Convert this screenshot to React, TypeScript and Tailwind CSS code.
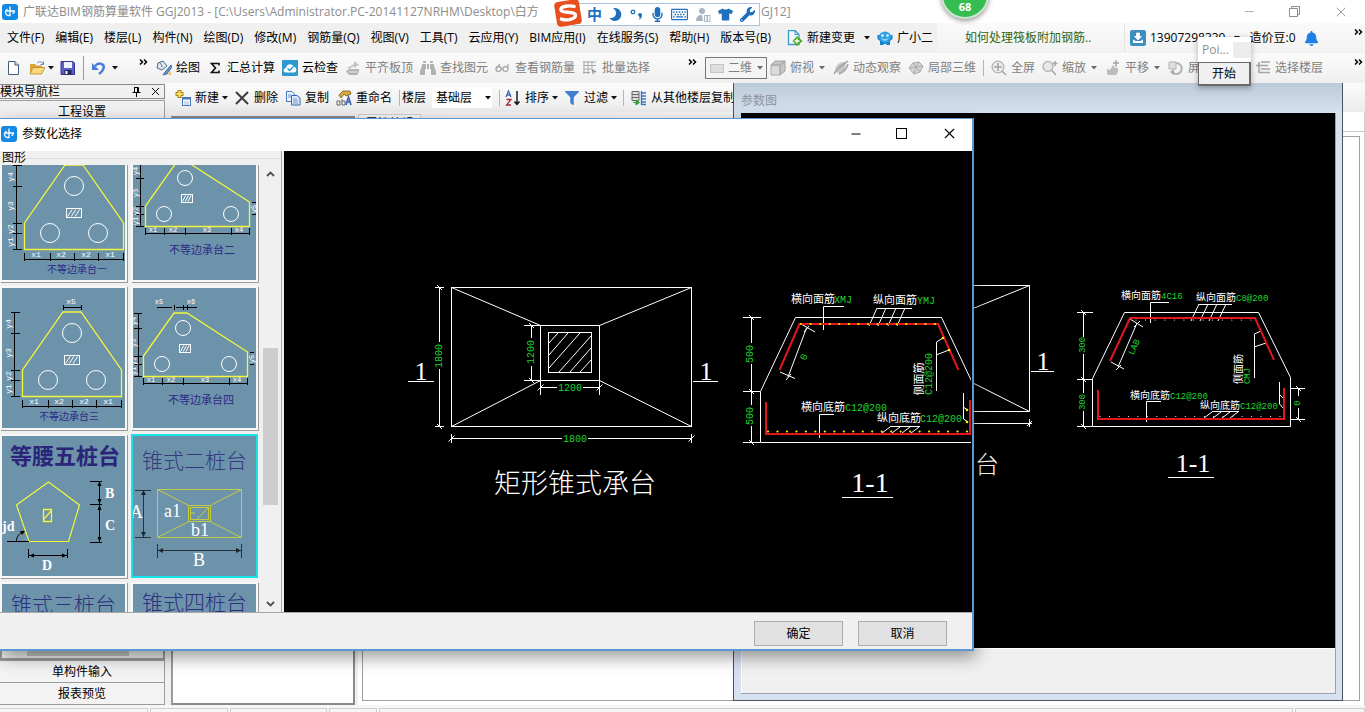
import React from "react";
import {
  FaBell,
  FaBinoculars,
  FaFilter,
  FaMicrophone,
  FaMoon,
  FaRegKeyboard,
  FaTshirt,
  FaWrench,
} from "react-icons/fa";
import { Minus, Square, X } from "lucide-react";

type Pt = [number, number];
const pts = (list: Pt[]) => list.map((p) => p.join(",")).join(" ");

/* ---------- small parts ---------- */

function Caret({ muted = false }: { muted?: boolean }) {
  return (
    <svg width="8" height="4" viewBox="0 0 8 4" className="shrink-0" aria-hidden="true">
      <path d="M1 0H7L4 3.4Z" fill={muted ? "#6b6b6b" : "#111"} />
    </svg>
  );
}

function More() {
  return (
    <svg width="9" height="6" viewBox="0 0 9 6" className="shrink-0" aria-hidden="true">
      <path d="M1 0.5L3.5 3L1 5.5M5 0.5L7.5 3L5 5.5" fill="none" stroke="#000" strokeWidth="1.5" />
    </svg>
  );
}

function AppLogo() {
  return (
    <svg width="16" height="16" viewBox="0 0 16 16" className="shrink-0" aria-hidden="true">
      <rect width="16" height="16" rx="3" fill="#1389e6" />
      <path
        d="M8 2.500V12M3.500 7H13M5.500 5C2.500 6.500 3 10.500 6 11.500H8.500M10.500 9.500C12.500 9 12.500 7.500 12 7"
        fill="none"
        stroke="#fff"
        strokeWidth="1.300"
      />
    </svg>
  );
}

const glyphs: Record<string, React.ReactNode> = {
  newfile: (
    <>
      <path d="M2.500 1.500H9L12.500 5V14.500H2.500Z" fill="#fff" stroke="#44597c" />
      <path d="M9 1.500V5H12.500" fill="#cfe0f5" stroke="#44597c" />
    </>
  ),
  open: (
    <>
      <path d="M1 4H6L7.500 5.500H13V13H1Z" fill="#d9a43a" />
      <path d="M1 14L4 7.500H16L12.500 14Z" fill="#f9d77a" stroke="#b9862a" strokeWidth="0.800" />
      <path d="M8 3C10 1 12.500 1 14 4M14.500 1.500V4.500H11.500" fill="none" stroke="#5b8abf" />
    </>
  ),
  save: (
    <>
      <path d="M1 1.500H13L14.500 3V14.500H1Z" fill="#5a5ec6" stroke="#33378f" />
      <rect x="4" y="2" width="8" height="6" fill="#eef1fb" />
      <rect x="4.500" y="10" width="7" height="4.500" fill="#23265e" />
      <rect x="5.500" y="11" width="2" height="3" fill="#fff" />
    </>
  ),
  undo: (
    <>
      <path d="M4 6C8 1.500 14 4 12.500 8.500C12 10.500 10 12.500 8 14" fill="none" stroke="#4a7fd8" strokeWidth="2.500" />
      <path d="M1 3V10H8Z" fill="#4a7fd8" />
    </>
  ),
  draw: (
    <>
      <path d="M2 3L7 1L11 6L6 10L1 8Z" fill="#dfe8f2" stroke="#4d6683" />
      <path d="M3 2C5 4 6 5 6 7" fill="none" stroke="#4d6683" />
      <path d="M15 5L9 12L7 15L11 14L16 7Z" fill="#5f8fd0" stroke="#3b5f99" strokeWidth="0.800" />
      <path d="M12 15L15 11V15Z" fill="#e8c13f" />
    </>
  ),
  sigma: <path d="M12 5.500V3.500H4.500L8.500 8L4.500 12.500H12V10.500" fill="none" stroke="#111" strokeWidth="1.600" />,
  cloud: (
    <>
      <rect width="16" height="16" rx="1" fill="#2f98cf" />
      <path d="M4 12.500C0.500 12.500 1 8 4 8C4.500 3.500 10.500 3 11.500 7C15.500 7 15 12.500 12 12.500Z" fill="#fff" />
      <path d="M5.500 8.500L7.500 10.500L11 7" fill="none" stroke="#2f98cf" strokeWidth="1.500" />
    </>
  ),
  slab: (
    <>
      <path d="M2 8L9 4V1L14 5L9 8V6L4 9Z" fill="#c3c3c3" />
      <path d="M1 11L5 9H14V12L12 15H4Z" fill="#b2b2b2" />
      <path d="M4 12H13" stroke="#e8e8e8" />
    </>
  ),
  glasses: (
    <path
      d="M1 9a2.500 2.500 0 1 0 5 0a2.500 2.500 0 1 0-5 0M8 9a2.500 2.500 0 1 0 5 0a2.500 2.500 0 1 0-5 0M6 9H8M1 9L5 4M13 9V4"
      fill="none"
      stroke="#a9a9a9"
      strokeWidth="1.300"
    />
  ),
  batch: (
    <>
      <path d="M1 2H14M1 5.500H14M1 9H9M1 12.500H8M2 1V14M6 1V14M10 1V8" stroke="#aaa" fill="none" />
      <path d="M9 8L15 12L12 12.500L11 15Z" fill="#9d9d9d" />
    </>
  ),
  cube: (
    <>
      <path d="M1 5H10V15H1Z" fill="#dcdcdc" stroke="#aaa" />
      <path d="M1 5L5 1H15L10 5ZM10 5L15 1V11L10 15Z" fill="#c6c6c6" stroke="#a3a3a3" />
    </>
  ),
  orbit: (
    <>
      <path d="M3 12C1 7 5 2 12 2C14 6 11 13 5 13Z" fill="#c4c4c4" />
      <path d="M1 14C4 8 9 5 15 1M6 14C11 12 14 8 15 4" stroke="#a2a2a2" fill="none" strokeWidth="1.500" />
    </>
  ),
  local3d: (
    <>
      <path d="M1 8L5 3L11 2L15 6L12 12L6 14Z" fill="#d4d4d4" stroke="#ababab" />
      <path d="M5 3L8 7L6 14M8 7L15 6M1 8L8 7M11 2L8 7L12 12" stroke="#aaa" fill="none" />
    </>
  ),
  fit: (
    <>
      <circle cx="7" cy="7" r="5.800" fill="#eee" stroke="#b2b2b2" strokeWidth="1.300" />
      <path d="M7 3V11M3 7H11M11 11L15 15" stroke="#a4a4a4" strokeWidth="1.600" />
    </>
  ),
  zoom: (
    <>
      <circle cx="6" cy="6.500" r="4.900" fill="#e9e9e9" stroke="#b8b8b8" strokeWidth="1.500" />
      <path d="M9.500 10L14 15M13 1V6M10.500 3.500H15.500" stroke="#a8a8a8" strokeWidth="1.600" />
    </>
  ),
  pan: (
    <>
      <path d="M2 14V9L5 10L8 5L10 8L13 8V12L11 15H3Z" fill="#bcbcbc" />
      <path d="M11 0V7M8 3H14" stroke="#a2a2a2" strokeWidth="1.400" />
    </>
  ),
  rotate: (
    <>
      <path d="M1 2H8V9H1Z" fill="#dedede" stroke="#b0b0b0" />
      <path d="M8 3A5.500 5.500 0 1 1 4 12" fill="none" stroke="#b3b3b3" strokeWidth="2" />
      <path d="M6 9L2 12L6 15Z" fill="#aaa" />
    </>
  ),
  floors: <path d="M6 2H15M4 5.500H13M6 9H15M4 12.500H15M4 2V9M1 5.500H5M4 9V13" stroke="#a4a4a4" strokeWidth="1.600" fill="none" />,
  create: (
    <>
      <path d="M4.500 0V8M0.500 4H8.500" stroke="#a98410" strokeWidth="4" />
      <path d="M4.500 1V7M1.500 4H7.500" stroke="#fbe36a" strokeWidth="2" />
      <rect x="7.500" y="7.500" width="8" height="8" fill="#fff" stroke="#4b77bd" />
      <path d="M7 8.500H16" stroke="#4b77bd" strokeWidth="2" />
      <path d="M9 12H14M9 14H14" stroke="#9db8de" />
    </>
  ),
  remove: <path d="M2 2L14 14M14 2L2 14" stroke="#3a3a3a" strokeWidth="1.900" />,
  copy: (
    <>
      <path d="M1.500 1.500H7L9.500 4V11.500H1.500Z" fill="#eaf2fd" stroke="#4b77bd" />
      <path d="M6.500 5.500H12L15 8V15H6.500Z" fill="#dbe9fb" stroke="#3566b0" />
      <path d="M3 5H6M3 7H6M8 9H12M8 11H13M8 13H13" stroke="#6f97d2" />
    </>
  ),
  rename: (
    <>
      <path d="M3 5L7 1H14L15 4L10 6L8 4L5 8Z" fill="#d9a83f" stroke="#7d5b16" strokeWidth="0.800" />
      <path d="M1 15V11H4V15H1M6 9V15H9V11H6" fill="none" stroke="#666" />
      <path d="M10 15L12.500 7L15 15M11 12H14.500" fill="none" stroke="#3b66b5" strokeWidth="1.700" />
    </>
  ),
  sort: (
    <>
      <path d="M1 7L3.500 1L6 7M2 5H5" fill="none" stroke="#3c62b8" strokeWidth="1.300" />
      <path d="M1.500 9.500H6L1.500 15H6" fill="none" stroke="#a32b3c" strokeWidth="1.300" />
      <path d="M12 1V14M9.500 11.500L12 14.500L14.500 11.500" fill="none" stroke="#111" strokeWidth="1.400" />
    </>
  ),
  floorcopy: (
    <>
      <path d="M1 1.500H8V10.500H1ZM1 4.500H8M1 7.500H8" fill="#ddd" stroke="#666" />
      <path d="M10.500 1V15M11 3H15M11 6H15M11 9H15M11 12H15M11 14.500H15" stroke="#3f78bd" strokeWidth="1.400" />
      <path d="M2 12.500H5M5 10V15L8.500 12.500Z" fill="#2fa22f" stroke="#2fa22f" />
    </>
  ),
  change: (
    <>
      <path d="M1.500 0.500H8L12 4.500V14.500H1.500Z" fill="#f2f9fd" stroke="#3a9bcb" strokeWidth="1.300" />
      <path d="M8 0.500V4.500H12" fill="none" stroke="#3a9bcb" />
      <path d="M10 6L15.500 11L10 16L5.500 11Z" fill="#49a91f" />
      <path d="M10 8.500V13.500M7.500 11H12.500" stroke="#fff" strokeWidth="1.300" />
    </>
  ),
  robot: (
    <>
      <path d="M0.500 5H15.500V9L13 11V15H10L8 13.500L6 15H3V11L0.500 9Z" fill="#1583cc" />
      <ellipse cx="8" cy="7" rx="6" ry="5.500" fill="#2ba2e8" />
      <circle cx="5.500" cy="5.500" r="1.200" fill="#fff" />
      <circle cx="10.500" cy="5.500" r="1.200" fill="#fff" />
      <path d="M5 8.500C6.500 10.500 9.500 10.500 11 8.500" stroke="#fff" fill="none" />
    </>
  ),
  user: (
    <>
      <rect width="16" height="16" rx="2" fill="#3d8fc0" />
      <path d="M6.500 3H9.500V6.500H11.500L8 10L4.500 6.500H6.500Z" fill="#fff" stroke="#fff" strokeWidth="0.800" />
      <path d="M3 9.500V13H13V9.500L10.500 11H5.500Z" fill="#fff" />
    </>
  ),
};

function Glyph({ name }: { name: string }) {
  if (name === "find") return <FaBinoculars className="size-4 shrink-0 text-[#b0b0b0]" />;
  if (name === "filter") return <FaFilter className="size-4 shrink-0 p-px text-[#3f7fd0]" />;
  return (
    <svg width="16" height="16" viewBox="0 0 16 16" className="shrink-0" aria-hidden="true">
      {glyphs[name]}
    </svg>
  );
}

type Tool = { icon: string; label?: string; caret?: boolean; muted?: boolean; tight?: boolean };

function ToolButton({ icon, label, caret, muted, tight }: Tool) {
  return (
    <button
      type="button"
      aria-label={label ?? icon}
      className={muted ? "flex shrink-0 items-center gap-1 text-[#808080]" : "flex shrink-0 items-center gap-1 text-black"}
    >
      <Glyph name={icon} />
      {label && <span>{label}</span>}
      {caret && (
        <span className={tight ? "-mx-0.5 flex" : "flex"}>
          <Caret muted={muted} />
        </span>
      )}
    </button>
  );
}

const Divider = () => <span className="h-4 w-px shrink-0 bg-[#b4b4b4]" />;

/* ---------- drawing helpers ---------- */

function Hatch({ x, y, w, h }: { x: number; y: number; w: number; h: number }) {
  const s = w / 4;
  return (
    <g stroke="#fff" fill="none">
      <rect x={x} y={y} width={w} height={h} />
      {[0, 1, 2].map((i) => (
        <line key={i} x1={x + s * i + 1} y1={y + h - 1} x2={x + s * (i + 1.5)} y2={y + 1} />
      ))}
    </g>
  );
}

function Slashes({ xs, y1, y2, dx }: { xs: number[]; y1: number; y2: number; dx: number }) {
  return (
    <>
      {xs.map((x) => (
        <line key={x} x1={x} y1={y1} x2={x - dx} y2={y2} />
      ))}
    </>
  );
}

function Dots({ from, to, y, n, r }: { from: number; to: number; y: number; n: number; r: number }) {
  return (
    <>
      {Array.from({ length: n }, (_, i) => (
        <circle key={i} cx={from + ((to - from) * i) / (n - 1)} cy={y} r={r} />
      ))}
    </>
  );
}

/* tick marks of a dimension line, each a small diagonal stroke */
function Ticks({ at }: { at: Pt[] }) {
  return (
    <>
      {at.map(([x, y]) => (
        <line key={x + "-" + y} x1={x - 3} y1={y + 3} x2={x + 3} y2={y - 3} />
      ))}
    </>
  );
}

const cjk = "font-['Noto_Sans_CJK_SC',sans-serif]";
const serif = "font-['Liberation_Serif','Noto_Sans_CJK_SC',serif]";

function Up({ x, y, children, cls }: { x: number; y: number; children: string; cls: string }) {
  return (
    <text x={x} y={y} transform={`rotate(-90 ${x} ${y})`} textAnchor="middle" dominantBaseline="central" className={cls}>
      {children}
    </text>
  );
}

const green10 = "fill-[#1fd62f] text-[10px] font-['Liberation_Mono',monospace]";
const green9 = "fill-[#1fd62f] text-[9px] font-['Liberation_Mono',monospace]";
const white11 = "fill-white text-[11px] font-['Noto_Sans_CJK_SC',sans-serif]";
const white10 = "fill-white text-[10px] font-['Noto_Sans_CJK_SC',sans-serif]";

function FoundationDrawing() {
  return (
    <svg width="687" height="461" viewBox="284 151 687 461" className="block shrink-0">
      <g fill="none" stroke="#fff">
        <rect x="451.500" y="287.500" width="240" height="139" />
        <rect x="540.500" y="325.500" width="59" height="55" />
        <rect x="548.500" y="332.500" width="43" height="40" />
        <path d="M451.500 287.500L540.500 325.500M691.500 287.500L599.500 325.500M451.500 426.500L540.500 380.500M691.500 426.500L599.500 380.500" />
        <path d="M549 343L558 333M549 355L568 333M549 368L580 333M559 372L591 336M570 372L591 348M580 372L591 360" />
        <path d="M439.500 287V342M439.500 369V427M435 287.500H444M435 426.500H444" />
        <path d="M531.500 325V338M531.500 366V381M524 325.500H540M524 380.500H540" />
        <path d="M540 387.500H557M583 387.500H600M540.500 381V395M599.500 381V395" />
        <path d="M451 438.500H562M588 438.500H692M451.500 434V443M691.500 434V443" />
        <path d="M408 381.500H434M693 381.500H718" />
        <path d="M437 285L442 290M437 424L442 429M529 323L534 328M529 378L534 383" />
        <Ticks at={[[540.5, 387.5], [599.5, 387.5], [451.5, 438.5], [691.5, 438.5]]} />
      </g>
      <Up x={439} y={356} cls={green10}>1800</Up>
      <Up x={531} y={352} cls={green10}>1200</Up>
      <text x="570" y="391" textAnchor="middle" className={green10}>1200</text>
      <text x="575" y="442" textAnchor="middle" className={green10}>1800</text>
      <g textAnchor="middle" className="fill-white">
        <text x="421" y="380" className={`${serif} text-[26px]`}>1</text>
        <text x="706" y="380" className={`${serif} text-[26px]`}>1</text>
        <text x="575" y="493" className={`${cjk} text-[27px] font-light`}>矩形锥式承台</text>
        <text x="870" y="492" className={`${serif} text-[28px]`}>1-1</text>
      </g>

      <g fill="none" stroke="#fff">
        <path d="M971 442.500H760.500V391.500L795.500 317.500H941.500L972 382" />
        <path d="M751.500 317V343M751.500 364V405M751.500 426V443M743 317.500H761M743 391.500H760M743 442.500H760" />
        <path d="M749 315L754 320M749 389L754 394M749 440L754 445" />
        <path d="M806.500 328L788 377M801 324L815 332M780 372L795 378.500M809 326L804 332M791 374L786 380" />
        <path d="M844 306.500H823.500V330M834 414.500H819.500V438" />
        <path d="M877 308.500H912M890 426.500H920" />
        <Slashes xs={[877, 886, 896, 905]} y1={308} y2={326} dx={8} />
        <Slashes xs={[890, 900, 910, 919]} y1={427} y2={433} dx={8} />
        <path d="M936.500 391V342L943 338M936 355L949 350" />
        <path d="M963.500 393V419L968 422M963 407L968 410" />
        <path d="M842 497.500H893" />
      </g>
      <g fill="none" stroke="#e3161b" strokeWidth="2">
        <polyline points={pts([[779.5, 370], [799.5, 324], [938, 324], [958.5, 370]])} />
        <polyline points={pts([[766, 402], [766, 434], [970, 434], [970, 400]])} />
      </g>
      <g fill="#fff200">
        <Dots from={801} to={935} y={324} n={15} r={1.1} />
        <Dots from={768} to={967} y={431.5} n={22} r={1.1} />
        <circle cx="943" cy="338" r="1.300" />
        <circle cx="949" cy="350" r="1.300" />
        <circle cx="967" cy="410" r="1.300" />
        <circle cx="967" cy="422" r="1.300" />
      </g>
      <text x="791" y="303" className={white11}>横向面筋</text>
      <text x="834" y="303" className={green10}>XMJ</text>
      <text x="873" y="304" className={white11}>纵向面筋</text>
      <text x="917" y="304" className={green10}>YMJ</text>
      <text x="801" y="411" className={white11}>横向底筋</text>
      <text x="845" y="411" className={green10}>C12@200</text>
      <text x="877" y="422" className={white11}>纵向底筋</text>
      <text x="920" y="422" className={green10}>C12@200</text>
      <Up x={750} y={354} cls={green10}>500</Up>
      <Up x={750} y={416} cls={green10}>500</Up>
      <Up x={918} y={379} cls={white11}>侧面筋</Up>
      <Up x={929} y={374} cls={green10}>C12@200</Up>
      <text x="804" y="360" transform="rotate(-65 804 357)" textAnchor="middle" className={green10}>0</text>
    </svg>
  );
}

function ParameterDrawing() {
  return (
    <svg width="594" height="535" viewBox="741 113 594 535" className="block shrink-0">
      <g fill="none" stroke="#fff">
        <path d="M973 285.500H1029.500V411.500H973M973 308.500L1029.500 285.500M973 383L1029.500 411.500" />
        <path d="M973 423.500H1032M1029.500 419V427M1027 426L1032 421M1031 371.500H1054" />
        <path d="M1092.500 426.500V378.500L1124.500 312.500H1258.500L1290.500 377.500V426.500Z" />
        <path d="M1083.500 312V337M1083.500 354V393M1083.500 411V427M1077 312.500H1093M1077 379.500H1092M1077 426.500H1092" />
        <path d="M1081 310L1086 315M1081 377L1086 382M1081 424L1086 429" />
        <path d="M1137 323L1118 367M1130 319L1143 327M1111 362L1124 369M1140 321L1134 327M1121 365L1116 370" />
        <path d="M1169 302.500H1150.500V323M1161 401.500H1146.500V422" />
        <path d="M1199 304.500H1232M1212 411.500H1239" />
        <Slashes xs={[1199, 1208, 1217, 1226]} y1={304} y2={321} dx={8} />
        <Slashes xs={[1212, 1221, 1230, 1238]} y1={412} y2={418} dx={8} />
        <path d="M1254.500 378V334L1261 331M1254 347L1266 343" />
        <path d="M1279.500 382V404L1284 409M1280 395L1284 399" />
        <path d="M1298.500 388V396M1298.500 408V420M1291 388.500H1305M1291 419.500H1305M1296 386L1301 391M1296 417L1301 422" />
        <path d="M1168 477.500H1214" />
      </g>
      <g fill="none" stroke="#e3161b" strokeWidth="2">
        <polyline points={pts([[1110, 361], [1130, 318], [1255, 318], [1274, 360]])} />
        <polyline points={pts([[1098, 390], [1098, 419], [1284, 419], [1284, 388]])} />
      </g>
      <g fill="#fff">
        <Dots from={1136} to={1251} y={320} n={13} r={0.6} />
        <Dots from={1100} to={1280} y={416.5} n={20} r={0.6} />
      </g>
      <text x="1121" y="299" className={white10}>横向面筋</text>
      <text x="1161" y="299" className={green9}>4C16</text>
      <text x="1196" y="301" className={white10}>纵向面筋</text>
      <text x="1236" y="301" className={green9}>C8@200</text>
      <text x="1130" y="399" className={white10}>横向底筋</text>
      <text x="1170" y="399" className={green9}>C12@200</text>
      <text x="1200" y="409" className={white10}>纵向底筋</text>
      <text x="1240" y="409" className={green9}>C12@200</text>
      <Up x={1083} y={345} cls={green9}>300</Up>
      <Up x={1083} y={402} cls={green9}>300</Up>
      <Up x={1237} y={369} cls={white10}>侧面筋</Up>
      <Up x={1248} y={376} cls={green9}>CMJ</Up>
      <Up x={1298} y={403} cls={green9}>0</Up>
      <text x="1134" y="350" transform="rotate(-65 1134 347)" textAnchor="middle" className={green9}>LAB</text>
      <g textAnchor="middle" className="fill-white">
        <text x="1043" y="370" className={`${serif} text-[26px]`}>1</text>
        <text x="987" y="473" className={`${cjk} text-[24px] font-light`}>台</text>
        <text x="1193" y="472" className={`${serif} text-[26px]`}>1-1</text>
      </g>
    </svg>
  );
}

/* ---------- gallery thumbnails (123 x 140) ---------- */

const tiny = "fill-white text-[8px] font-['Liberation_Mono',monospace]";
const tiny6 = "fill-white text-[7px] font-['Liberation_Mono',monospace]";

function SymmetricCap({ title, top, tx, ty }: { title: string; top?: boolean; tx: number; ty: number }) {
  return (
    <>
      <g transform={top ? "translate(-2 -1)" : undefined}>
        <polygon
          points={pts([[63, 25], [81, 25], [121.5, 83], [121.5, 109.5], [22.5, 109.5], [22.5, 83]])}
          fill="none"
          stroke="#f4f73a"
          strokeWidth="1.300"
        />
        <g fill="none" stroke="#fff">
          <circle cx="72" cy="46" r="9.500" />
          <circle cx="48" cy="93" r="9.500" />
          <circle cx="96" cy="93" r="9.500" />
        </g>
        <Hatch x={64.5} y={68.5} w={15} h={9} />
        <path
          d="M14.500 25V109M11 25.500H20M11 46.500H20M11 83.500H20M11 93.500H20M11 109.500H20M22 119.500H122M22.500 113V121M48.500 113V121M72.500 113V121M96.500 113V121M121.500 113V121"
          stroke="#000"
        />
        {top && <path d="M63 20.500H81M63.500 18V23M81.500 18V23" stroke="#000" />}
        <Up x={8} y={37} cls={tiny}>y4</Up>
        <Up x={8} y={66} cls={tiny}>y3</Up>
        <Up x={8} y={89} cls={tiny}>y2</Up>
        <Up x={8} y={102} cls={tiny}>y1</Up>
        <g textAnchor="middle" className={tiny}>
          <text x="34" y="117">x1</text>
          <text x="59" y="117">x2</text>
          <text x="84" y="117">x2</text>
          <text x="108" y="117">x1</text>
          {top && <text x="71" y="17">x5</text>}
        </g>
      </g>
      <text x={tx} y={ty} textAnchor="middle" className={`${cjk} fill-[#2f2a86] text-[10px]`}>
        {title}
      </text>
    </>
  );
}

function SkewCap({ title, top, tx, ty }: { title: string; top?: boolean; tx: number; ty: number }) {
  return (
    <>
      <g transform={top ? "translate(-2 2)" : undefined}>
        <polygon
          points={pts([[43, 23], [56, 23], [116.5, 62], [116.5, 86.5], [12.5, 86.5], [12.5, 66]])}
          fill="none"
          stroke="#f4f73a"
          strokeWidth="1.300"
        />
        <g fill="none" stroke="#fff">
          <circle cx="52" cy="38" r="7.500" />
          <circle cx="31" cy="74" r="7.500" />
          <circle cx="98" cy="74" r="7.500" />
        </g>
        <Hatch x={48.5} y={54.5} w={11} h={8} />
        <path
          d="M7.500 23V87M3 23.500H11M3 38.500H11M3 66.500H11M3 74.500H11M3 86.500H11M12 93.500H117M12.500 88V95M31.500 88V95M52.500 88V95M98.500 88V95M116.500 88V95M119 62.500H123M119 74.500H123"
          stroke="#000"
        />
        {top && <path d="M26 17.500H41M45 17.500H66M43.500 15V20M52.500 15V20M56.500 15V20" stroke="#000" />}
        <Up x={3} y={31} cls={tiny6}>y4</Up>
        <Up x={3} y={53} cls={tiny6}>y3</Up>
        <Up x={3} y={71} cls={tiny6}>y2</Up>
        <Up x={3} y={81} cls={tiny6}>y1</Up>
        <Up x={121} y={69} cls={tiny6}>y5</Up>
        <g textAnchor="middle" className={tiny6}>
          <text x="20" y="92">x1</text>
          <text x="40" y="92">x2</text>
          <text x="74" y="92">x3</text>
          <text x="106" y="92">x4</text>
          {top && <text x="28" y="14">x5</text>}
          {top && <text x="60" y="14">x6</text>}
        </g>
      </g>
      <text x={tx} y={ty} textAnchor="middle" className={`${cjk} fill-[#2f2a86] text-[11px]`}>
        {title}
      </text>
    </>
  );
}

function PentagonCap() {
  return (
    <>
      <text x="8" y="28" className={`${cjk} fill-[#2a2578] text-[22px] font-bold`}>等腰五桩台</text>
      <polygon
        points={pts([[46.5, 46], [77.5, 69], [66.5, 105.5], [27, 105.5], [14.5, 69]])}
        fill="none"
        stroke="#f4f73a"
        strokeWidth="1.200"
      />
      <path d="M41.500 73.500H49.500V85.500H41.500ZM42 83L49 75" fill="none" stroke="#f4f73a" strokeWidth="1.300" />
      <path
        d="M97.500 46V106M88 45.500H100M88 68.500H100M88 106.500H100M27 119.500H66M26.500 113V122M65.500 113V122M5 105.500H27M14.500 105C14.500 100 18 97 22 95"
        fill="none"
        stroke="#000"
      />
      <path
        d="M97.500 45L95.500 50H99.500ZM97.500 68L95.500 63H99.500ZM97.500 69L95.500 74H99.500ZM97.500 106L95.500 101H99.500ZM27 119.500L32 117.500V121.500ZM65 119.500L60 117.500V121.500ZM23 95L18 95L20 99Z"
        fill="#000"
      />
      <g className={`${serif} fill-white text-[14px] font-bold`}>
        <text x="103" y="62">B</text>
        <text x="103" y="94">C</text>
        <text x="40" y="134">D</text>
        <text x="0" y="95">jd</text>
      </g>
    </>
  );
}

function TwoPileCap() {
  return (
    <>
      <text x="9" y="32" className={`${cjk} fill-[#35397f] text-[21px] font-light`}>锥式二桩台</text>
      <g fill="none" stroke="#c3cd3f">
        <path d="M24.500 53.500H108.500V101.500H24.500ZM24.500 53.500L55 69M108.500 53.500L78 69M24.500 101.500L55 86M108.500 101.500L78 86" />
        <rect x="55.500" y="69.500" width="22" height="16" />
        <rect x="57.500" y="71.500" width="18" height="12" />
        <path d="M64 83L75 72M58 77H62" />
      </g>
      <path d="M10.500 54V101M2 54.500H18M2 101.500H18M24 114.500H108M24.500 108V122M108.500 108V122" stroke="#26333c" />
      <path
        d="M10.500 54L8 59H13ZM10.500 101L8 96H13ZM25 114.500L30 112V117ZM108 114.500L103 112V117Z"
        fill="#1b262d"
      />
      <g className={`${serif} fill-white text-[18px]`}>
        <text x="-3" y="82">A</text>
        <text x="31" y="81">a1</text>
        <text x="58" y="100">b1</text>
        <text x="60" y="130">B</text>
      </g>
    </>
  );
}

function TitleOnly({ title, x, y }: { title: string; x: number; y: number }) {
  return (
    <text x={x} y={y} className={`${cjk} fill-[#2f2f80] text-[21px] font-light`}>
      {title}
    </text>
  );
}

const thumbs: { id: string; selected?: boolean; art: React.ReactNode }[] = [
  { id: "不等边承台一", art: <SymmetricCap title="不等边承台一" tx={75} ty={133} /> },
  { id: "不等边承台二", art: <SkewCap title="不等边承台二" tx={69} ty={114} /> },
  { id: "不等边承台三", art: <SymmetricCap title="不等边承台三" top tx={67} ty={132} /> },
  { id: "不等边承台四", art: <SkewCap title="不等边承台四" top tx={68} ty={116} /> },
  { id: "等腰五桩台", art: <PentagonCap /> },
  { id: "锥式二桩台", selected: true, art: <TwoPileCap /> },
  { id: "锥式三桩台", art: <TitleOnly title="锥式三桩台" x={9} y={28} /> },
  { id: "锥式四桩台", art: <TitleOnly title="锥式四桩台" x={9} y={26} /> },
];

/* ---------- application frame ---------- */

const menus = [
  "文件(F)", "编辑(E)", "楼层(L)", "构件(N)", "绘图(D)", "修改(M)", "钢筋量(Q)", "视图(V)",
  "工具(T)", "云应用(Y)", "BIM应用(I)", "在线服务(S)", "帮助(H)", "版本号(B)",
];

function TitleBar() {
  return (
    <header className="flex h-[23px] shrink-0 items-center bg-white pl-0.5 text-[#8c8c8c]">
      <AppLogo />
      <span className="ml-[5px] w-[738px] shrink-0 overflow-hidden whitespace-nowrap">
        广联达BIM钢筋算量软件 GGJ2013 - [C:\Users\Administrator.PC-20141127NRHM\Desktop\白方
      </span>
      <span>GJ12]</span>
      <div className="ml-auto flex items-center gap-[33px] pr-4">
        <button type="button" aria-label="最小化"><Minus size={13} strokeWidth={1.3} /></button>
        <button type="button" aria-label="还原">
          <svg width="11" height="11" viewBox="0 0 11 11" fill="none" stroke="#8c8c8c">
            <path d="M0.500 2.500H8.500V10.500H0.500ZM2.500 2.500V0.500H10.500V8.500H8.500" />
          </svg>
        </button>
        <button type="button" aria-label="关闭"><X size={16} strokeWidth={1.3} /></button>
      </div>
    </header>
  );
}

function MenuBar() {
  return (
    <div className="flex h-[30px] shrink-0 items-center bg-[#f0f0f0] whitespace-nowrap">
      <nav className="flex w-[787px] shrink-0 items-center gap-[11px] pl-[7px]">
        {menus.map((m) => (
          <button key={m} type="button">{m}</button>
        ))}
      </nav>
      <div className="flex w-[150px] shrink-0 items-center gap-1.5">
        <button type="button" className="flex items-center gap-1">
          <Glyph name="change" />
          <span>新建变更</span>
          <span className="ml-1 flex"><Caret /></span>
        </button>
        <button type="button" className="flex items-center gap-1">
          <Glyph name="robot" />
          <span>广小二</span>
        </button>
      </div>
      <div className="flex h-full flex-1 items-center bg-linear-to-b from-[#fafafa] to-[#f2f2f2]">
        <a href="#help" className="w-[187px] shrink-0 pl-7 text-[#2f6410]">
          如何处理筏板附加钢筋..
        </a>
        <div className="flex h-full flex-1 items-center gap-1 border-l border-[#e4e4e4] pl-[5px]">
          <Glyph name="user" />
          <span>13907298339</span>
          <span className="mx-1 flex"><Caret /></span>
          <span>造价豆:0</span>
          <FaBell className="ml-1 size-[15px] text-[#1f7fe8]" />
          <span className="mr-0.5 mb-3 ml-auto flex"><More /></span>
        </div>
      </div>
    </div>
  );
}

function ToolBar() {
  return (
    <div className="flex h-[30px] shrink-0 items-center bg-linear-to-b from-[#fbfbfb] to-[#efefef] whitespace-nowrap">
      <div className="flex w-[156px] shrink-0 items-center gap-[7px] pl-1.5">
        <ToolButton icon="newfile" />
        <ToolButton icon="open" caret tight />
        <ToolButton icon="save" />
        <span className="h-6 w-px bg-[#9a9a9a]" />
        <ToolButton icon="undo" caret />
        <span className="mr-2 mb-3 ml-auto flex"><More /></span>
      </div>
      <div className="flex w-[549px] shrink-0 items-center gap-[7px]">
        <ToolButton icon="draw" label="绘图" />
        <ToolButton icon="sigma" label="汇总计算" />
        <ToolButton icon="cloud" label="云检查" />
        <ToolButton icon="slab" label="平齐板顶" muted />
        <ToolButton icon="find" label="查找图元" muted />
        <ToolButton icon="glasses" label="查看钢筋量" muted />
        <ToolButton icon="batch" label="批量选择" muted />
        <span className="mr-2 mb-3 ml-auto flex"><More /></span>
      </div>
      <div className="flex flex-1 items-center gap-[7px]">
        <div className="-mr-1 flex h-[22px] w-[62px] shrink-0 items-center gap-1 border border-[#777] bg-[#f4f4f4] px-1 text-[#808080]">
          <span className="h-[9px] w-3.5 shrink-0 border border-[#c4c4c4] bg-[#dedede]" />
          <select aria-label="视图模式" className="w-6 appearance-none bg-transparent outline-none">
            <option>二维</option>
          </select>
          <Caret muted />
        </div>
        <ToolButton icon="cube" label="俯视" caret muted />
        <ToolButton icon="orbit" label="动态观察" muted />
        <ToolButton icon="local3d" label="局部三维" muted />
        <Divider />
        <ToolButton icon="fit" label="全屏" muted />
        <ToolButton icon="zoom" label="缩放" caret muted />
        <ToolButton icon="pan" label="平移" caret muted />
        <ToolButton icon="rotate" label="屏" muted />
        <span className="ml-12 flex"><ToolButton icon="floors" label="选择楼层" muted /></span>
        <span className="mr-0.5 mb-3 ml-auto flex"><More /></span>
      </div>
    </div>
  );
}

function ComponentBar() {
  return (
    <div className="flex h-[29px] shrink-0 items-center gap-[7px] bg-linear-to-b from-[#fbfbfb] to-[#ececec] pl-2.5 whitespace-nowrap">
      <ToolButton icon="create" label="新建" caret tight />
      <ToolButton icon="remove" label="删除" />
      <ToolButton icon="copy" label="复制" />
      <ToolButton icon="rename" label="重命名" />
      <div className="flex items-center gap-0.5">
        <Divider />
        <label htmlFor="floor">楼层</label>
        <div className="ml-1 flex items-center bg-white py-0.5 pl-1">
          <select id="floor" className="w-12 appearance-none bg-transparent outline-none">
            <option>基础层</option>
          </select>
          <Caret />
        </div>
      </div>
      <Divider />
      <div className="-ml-0.5 flex items-center gap-[7px]">
        <ToolButton icon="sort" label="排序" caret tight />
        <ToolButton icon="filter" label="过滤" caret tight />
        <Divider />
        <ToolButton icon="floorcopy" label="从其他楼层复制" />
      </div>
    </div>
  );
}

function Sidebar() {
  return (
    <aside className="flex w-[165px] shrink-0 flex-col bg-[#f0f0f0]">
      <div className="mt-px flex h-[15px] items-center border border-l-0 border-[#8a8a8a]">
        <span>模块导航栏</span>
        <svg width="9" height="10" viewBox="0 0 9 10" className="ml-auto" fill="none" stroke="#000">
          <path d="M2.500 0.500H6.500V5.500M2.500 0V5.500M5.500 0V5M0.500 5.500H8.500M4.500 5.500V10" />
        </svg>
        <X size={13} strokeWidth={1.8} className="mr-0.5 ml-2" />
      </div>
      <button type="button" className="mt-px h-6 border border-l-0 border-[#a0a0a0] bg-[#f0f0f0]">工程设置</button>
      <div className="flex flex-1 flex-col justify-end border-2 border-t-0 border-[#9a9a9a]">
        <div className="flex h-[17px] items-center justify-between px-1.5">
          <span className="h-full w-2.5" />
          <span className="mb-1 h-4 w-[102px] bg-[#c4c4c4]" />
          <span className="h-full w-5" />
        </div>
      </div>
      <button type="button" className="h-[23px] border border-l-0 border-[#9b9b9b] bg-[#f3f3f3]">单构件输入</button>
      <button type="button" className="h-[22px] border border-t-0 border-l-0 border-[#9b9b9b] bg-[#f3f3f3]">报表预览</button>
    </aside>
  );
}

function Workspace() {
  return (
    <main className="flex min-h-0 flex-1">
      <Sidebar />
      <div className="flex min-w-0 flex-1 flex-col bg-[#f0f0f0]">
        <ComponentBar />
        <div className="flex min-h-0 flex-1 pl-[6px]">
          <div className="mt-1 mr-[3px] w-[184px] shrink-0 border-2 border-[#8a8a8a] border-l-[#9a9a9a] bg-white" />
          <div className="flex flex-1 flex-col border-r border-[#cfcfcf]">
            <div className="h-5 border-b border-[#c8c8c8] bg-linear-to-r from-[#f0f0f0] to-white pt-0.5">
              <button type="button" className="h-[18px] w-[63px] border border-b-0 border-[#cfcfcf] bg-[#f8f8f8] leading-4">
                属性编辑
              </button>
            </div>
            <div className="flex flex-1 bg-white p-1">
              <div className="flex-1 border border-[#9f9f9f] bg-white" />
            </div>
          </div>
        </div>
      </div>
    </main>
  );
}

function ParameterWindow() {
  return (
    <section
      aria-label="参数图"
      className="absolute top-[83px] right-[22px] bottom-[11px] left-[733px] flex flex-col border border-t-0 border-[#4c525a] bg-[#d7e2f0] pr-1.5 pb-[7px] pl-[7px]"
    >
      <h2 className="-mr-1.5 -ml-[7px] flex h-[30px] shrink-0 items-center bg-linear-to-b from-[#bccada] to-[#d5e1ee] pt-1.5 pl-[7px] text-[#8d959e]">
        参数图
      </h2>
      <div className="flex flex-1 flex-col border-r border-b border-[#9aa1a8]">
        <div className="flex-1 overflow-hidden bg-black">
          <ParameterDrawing />
        </div>
        <div className="h-[45px] shrink-0 border-t border-l border-white bg-[#f0f0f0]" />
      </div>
    </section>
  );
}

function Chevron({ down = false }: { down?: boolean }) {
  return (
    <svg width="9" height="6" viewBox="0 0 9 6" fill="none" stroke="#505050" strokeWidth="1.800">
      <path d={down ? "M1 1L4.500 4.500L8 1" : "M1 5L4.500 1.500L8 5"} />
    </svg>
  );
}

function SelectionDialog() {
  return (
    <section
      role="dialog"
      aria-label="参数化选择"
      className="absolute top-[118px] left-0 flex h-[533px] w-[974px] flex-col border border-r-2 border-b-2 border-l-0 border-[#5a97d3] bg-[#f0f0f0] shadow-[2px_6px_16px_rgba(0,0,0,0.4)]"
    >
      <header className="flex h-8 shrink-0 items-center bg-white pb-[3px]">
        <span className="ml-px flex items-center gap-[5px]">
          <AppLogo />
          <span>参数化选择</span>
        </span>
        <div className="ml-auto flex items-center gap-[33px] pr-3.5">
          <button type="button" aria-label="最小化"><Minus size={14} strokeWidth={1.8} /></button>
          <button type="button" aria-label="最大化">
            <svg width="12" height="12" viewBox="0 0 12 12" fill="none" stroke="#000">
              <rect x="0.500" y="0.500" width="10" height="10" />
            </svg>
          </button>
          <button type="button" aria-label="关闭"><X size={17} strokeWidth={1.6} /></button>
        </div>
      </header>
      <div className="flex min-h-0 flex-1">
        <div className="flex w-[284px] shrink-0 flex-col">
          <div className="mr-0.5 flex h-3.5 shrink-0 items-center gap-px border-r border-[#a8a8a8] pl-0.5">
            <span className="leading-[14px]">图形</span>
            <span className="h-px flex-1 bg-[#dcdcdc]" />
          </div>
          <div className="mr-0.5 flex min-h-0 flex-1 border-r border-[#a8a8a8]">
            <div className="w-[262px] shrink-0 overflow-hidden">
              <div className="-mt-[27px] grid w-[258px] grid-cols-2 gap-1">
                {thumbs.map((t) => (
                  <button
                    key={t.id}
                    type="button"
                    aria-label={t.id}
                    className={
                      t.selected
                        ? "h-36 w-[127px] shrink-0 border-2 border-[#17e3ea] bg-[#6c93aa]"
                        : "h-36 w-[127px] shrink-0 border-2 border-[#f7f7f7] bg-[#6c93aa] shadow-[1px_1px_0_#9a9a9a]"
                    }
                  >
                    <svg width="123" height="140" viewBox="0 0 123 140" className="block">
                      {t.art}
                    </svg>
                  </button>
                ))}
              </div>
            </div>
            <div className="flex w-[17px] flex-col items-center">
              <button type="button" aria-label="向上" className="flex h-[17px] items-center"><Chevron /></button>
              <span className="flex-[166]" />
              <span className="w-[15px] flex-[157] bg-[#cdcdcd]" />
              <span className="flex-[90]" />
              <button type="button" aria-label="向下" className="flex h-[17px] items-center"><Chevron down /></button>
            </div>
          </div>
        </div>
        <div className="min-w-0 flex-1 overflow-hidden bg-black">
          <FoundationDrawing />
        </div>
      </div>
      <footer className="flex h-[37px] shrink-0 items-center justify-end gap-[15px] border-t border-[#a8a8a8] pr-[25px]">
        <button type="button" className="mt-1 h-[25px] w-[89px] border border-[#adadad] bg-[#e1e1e1] pt-0.5">确定</button>
        <button type="button" className="mt-1 h-[25px] w-[89px] border border-[#adadad] bg-[#e1e1e1] pt-0.5">取消</button>
      </footer>
    </section>
  );
}

function ImeBar() {
  return (
    <div className="absolute top-[3px] left-[572px] flex h-[23px] w-[188px] items-center justify-between border border-[#a9c3de] bg-white pr-1 pl-3.5 text-[#1f6fbd]">
      <svg width="30" height="30" viewBox="0 0 30 30" className="absolute -top-[6px] -left-5" aria-hidden="true">
        <g transform="rotate(-9 15 15)">
          <rect x="2.500" y="2.500" width="25" height="25" rx="4" fill="#e94f1d" />
          <path
            d="M22 9.500C18 7.500 8.500 7 8.500 11C8.500 15 22 13.500 22 18C22 22.500 12 22.500 7.500 20"
            fill="none"
            stroke="#fff"
            strokeWidth="3.400"
            strokeLinecap="round"
          />
        </g>
      </svg>
      <span className="text-[15px] leading-none font-bold">中</span>
      <FaMoon className="size-[13px] -scale-x-100" />
      <svg width="14" height="14" viewBox="0 0 14 14" aria-hidden="true">
        <circle cx="4" cy="4" r="1.800" fill="none" stroke="currentColor" strokeWidth="1.300" />
        <path d="M9 7a2 2 0 0 1 4 0C13 9 12 11 9.500 12C10.500 11 10.800 10 10.500 9Z" fill="currentColor" />
      </svg>
      <FaMicrophone className="size-[15px]" />
      <FaRegKeyboard className="size-[17px]" />
      <svg width="16" height="16" viewBox="0 0 16 16" fill="#a9b4c0" aria-hidden="true">
        <circle cx="7" cy="4" r="3" />
        <path d="M1 14C1 9 4 8 7 8L8 14Z" />
        <path d="M9.500 8.500H12V14.500H9.500ZM12.500 8.500H15V14.500H12.500Z" fill="#fff" stroke="#a9b4c0" />
      </svg>
      <FaTshirt className="size-[15px]" />
      <FaWrench className="size-[15px]" />
    </div>
  );
}

function PointerTool() {
  return (
    <div className="absolute top-[37px] left-[1198px] flex h-[49px] w-[53px] flex-col bg-white shadow-[0_2px_6px_rgba(0,0,0,0.3)]">
      <div className="flex flex-1 items-center justify-between pl-1 text-[#8f8f8f]">
        <span>Poi...</span>
        <span className="h-4 w-[18px] bg-[#ececec]" />
      </div>
      <button type="button" className="h-6 border border-r-2 border-b-2 border-[#6a6a6a] bg-[#f0f0f0]">开始</button>
    </div>
  );
}

export default function App() {
  return (
    <div className="relative flex h-screen flex-col overflow-hidden bg-[#f0f0f0] font-['Open_Sans','Noto_Sans_CJK_SC',sans-serif] text-xs leading-4 text-black">
      <TitleBar />
      <MenuBar />
      <ToolBar />
      <Workspace />
      <footer className="flex h-[7px] shrink-0 items-end gap-0.5 bg-[#f6f6f6]">
        <span className="h-1 w-[148px] border-t border-r border-[#cfcfcf]" />
        <span className="h-1 w-[78px] border border-b-0 border-[#cfcfcf]" />
        <span className="h-1 w-[97px] border border-b-0 border-[#cfcfcf]" />
        <span className="h-1 w-12 border border-b-0 border-[#cfcfcf]" />
        <span className="h-1 flex-1 border border-b-0 border-[#cfcfcf]" />
        <span className="h-1 w-[70px] border border-b-0 border-[#cfcfcf]" />
      </footer>
      <ParameterWindow />
      <SelectionDialog />
      <ImeBar />
      <div className="absolute -top-[29px] left-[941px] flex size-12 items-end justify-center rounded-full border-2 border-[#c9e8cf] bg-[#35bd51] pb-0.5 text-[11px] font-bold text-white shadow-[0_2px_5px_rgba(0,0,0,0.4)]">
        68
      </div>
      <PointerTool />
    </div>
  );
}
